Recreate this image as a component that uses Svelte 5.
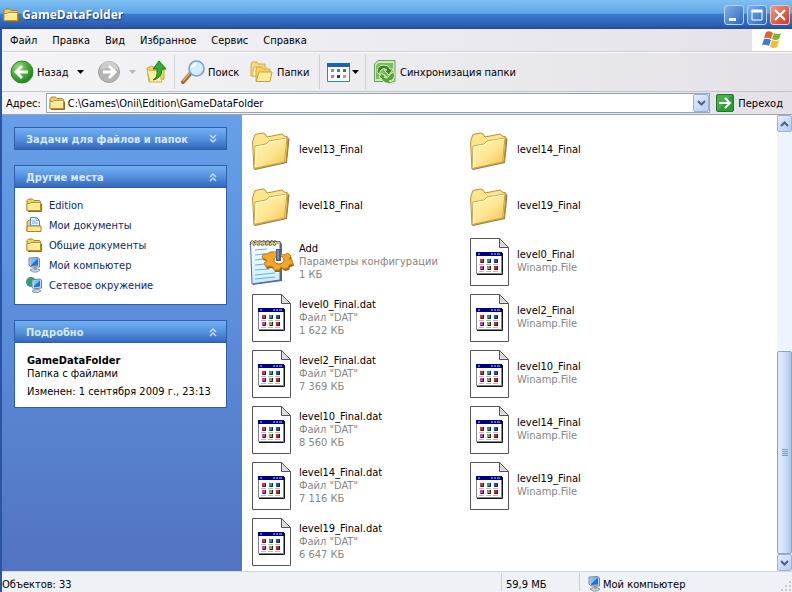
<script>
	const menus = ["Файл", "Правка", "Вид", "Избранное", "Сервис", "Справка"];

	const places = [
		{ name: "Edition", icon: "folder" },
		{ name: "Мои документы", icon: "docs" },
		{ name: "Общие документы", icon: "folder" },
		{ name: "Мой компьютер", icon: "computer" },
		{ name: "Сетевое окружение", icon: "network" },
	];

	const items = [
		{ name: "level13_Final", icon: "folder" },
		{ name: "level14_Final", icon: "folder" },
		{ name: "level18_Final", icon: "folder" },
		{ name: "level19_Final", icon: "folder" },
		{ name: "Add", icon: "config", type: "Параметры конфигурации", size: "1 КБ" },
		{ name: "level0_Final", icon: "file", type: "Winamp.File" },
		{ name: "level0_Final.dat", icon: "file", type: 'Файл "DAT"', size: "1 622 КБ" },
		{ name: "level2_Final", icon: "file", type: "Winamp.File" },
		{ name: "level2_Final.dat", icon: "file", type: 'Файл "DAT"', size: "7 369 КБ" },
		{ name: "level10_Final", icon: "file", type: "Winamp.File" },
		{ name: "level10_Final.dat", icon: "file", type: 'Файл "DAT"', size: "8 560 КБ" },
		{ name: "level14_Final", icon: "file", type: "Winamp.File" },
		{ name: "level14_Final.dat", icon: "file", type: 'Файл "DAT"', size: "7 116 КБ" },
		{ name: "level19_Final", icon: "file", type: "Winamp.File" },
		{ name: "level19_Final.dat", icon: "file", type: 'Файл "DAT"', size: "6 647 КБ" },
	];

	let path = $state("C:\\Games\\Onii\\Edition\\GameDataFolder");
	let tasksOpen = $state(false);
	let placesOpen = $state(true);
	let detailsOpen = $state(true);
</script>

{#snippet smallFolder()}
	<svg class="icon16" viewBox="0 0 16 16">
		<path d="M1 13.5v-10L2.500 2h4L8 3.500h5.500l1 1v9z" fill="#f3cf5b" stroke="#a8842a" />
		<path d="M1 13.500V6.500h3l1-1h9.500v8z" fill="#fdea93" stroke="#b8912e" />
		<path d="M2 14.500h13.500v-8" fill="none" stroke="#8a6d24" />
		<path d="M5 6.500h9" stroke="#fffbe0" />
	</svg>
{/snippet}

{#snippet docs()}
	<svg class="icon16" viewBox="0 0 16 16">
		<path d="M1 14V5l2-2h2v11z" fill="#f3cf5b" stroke="#a8842a" />
		<path d="M4.500 11V.5h6l3 3V11z" fill="#e6f4ff" stroke="#5f86b8" />
		<path d="M10 .5v3h3M6 4h3M6 6h6" fill="none" stroke="#78a6dc" />
		<path d="M1 14.500V9h14v5.500z" fill="#fce88e" stroke="#a8842a" />
		<path d="M4 8.500h9" stroke="#6ea2d8" />
	</svg>
{/snippet}

{#snippet computer()}
	<svg class="icon16" viewBox="0 0 16 16">
		<path d="M4 13l5-2 5 2-3 2H7z" fill="#d0d4dc" stroke="#8e96a6" />
		<path d="M8 9h3v4H8z" fill="#98a2b4" />
		<path d="M3 1l9-.5 1.500 1.500v8L5 10 3 8z" fill="#bccbe0" stroke="#7187ac" />
		<path d="M5 2l7-.5v7L5 9z" fill="#1c72d2" />
		<path d="M5 2l7-.5L5 8z" fill="#6ec4f6" />
	</svg>
{/snippet}

{#snippet network()}
	<svg class="icon16" viewBox="0 0 16 16">
		<circle cx="5" cy="5" r="5" fill="#2d8bd0" />
		<path d="M1 3l3-3 4 1-1 3-3 1 1 4-4-2z" fill="#38a446" />
		<path d="M6 14l6-2 3 2-3 1.500H8z" fill="#d0d4dc" stroke="#8e96a6" />
		<path d="M6 3l8-1 1.500 1v8l-8 1L6 10z" fill="#c7d7ea" stroke="#6681aa" />
		<path d="M8 4l6-.5v6l-6 1z" fill="#1c72d2" />
		<path d="M8 4l6-.5L8 9z" fill="#6ec4f6" />
	</svg>
{/snippet}

{#snippet bigFolder()}
	<svg class="icon48" viewBox="0 0 48 48">
		<defs>
			<linearGradient id="folderFront" x1="0" y1="0" x2="1" y2="1">
				<stop offset="0" stop-color="#fff5b0" />
				<stop offset=".5" stop-color="#fde795" />
				<stop offset="1" stop-color="#f4c14a" />
			</linearGradient>
		</defs>
		<path d="M8 44l32-7 2.500-24-2-1L38 36 7 43z" fill="#6b5a30" opacity=".8" />
		<path d="M5.500 16l1-3 1-4L10 8l6-1 2 1 2 3 15-3 2 2 4 1-2 25L7 43z" fill="#fbe58c" stroke="#b59335" />
		<path d="M7 42.500L8 20l11-2 3-3 18-3-2.500 24z" fill="url(#folderFront)" stroke="#c9a544" />
		<path d="M8.500 41L9 21l11-2 3-3 16-3" fill="none" stroke="#fffbe0" />
	</svg>
{/snippet}

{#snippet configFile()}
	<svg class="icon48" viewBox="0 0 48 48">
		<defs>
			<linearGradient id="notePaper" x1="0" y1="0" x2="0" y2="1">
				<stop offset="0" stop-color="#fff" />
				<stop offset="1" stop-color="#c7effc" />
			</linearGradient>
		</defs>
		<path d="M6 5l28-1 1 3v36L6 47z" fill="#526090" />
		<path d="M3.500 4.500L33 3.500V42L5 46z" fill="url(#notePaper)" stroke="#5a5ecb" />
		<path d="M8 12l12-1M8 17l12-1M8 22l10-1M8 27l10-1M8 32l14-1M8 37l20-2M8 41l20-2" stroke="#70abe5" />
		<path d="M3 7q1-7 4-3t-1 3q1-7 5-3t-1 3q1-7 5-3t-1 3q1-7 5-3t-1 3q1-7 5-3t-1 3q1-7 5-3t-1 3q1-7 4-3" fill="none" stroke="#55563e" />
		<path d="M4 5h29" stroke="#e0c22e" stroke-width="2" stroke-dasharray="3 2" />
		<g transform="translate(32 22)">
			<path id="cog" d="M-4-8l4-1 2 3 3 1 4-2 3 3-2 3 3 1 1 4-4 1-1 3-4 1-3-2-2 3h-5l-1-3-3-1-4 1-2-4 3-2-2-2-3-1 1-4 4 0 3-2z" transform="translate(1 2)" fill="#94631b" />
			<path d="M-4-8l4-1 2 3 3 1 4-2 3 3-2 3 3 1 1 4-4 1-1 3-4 1-3-2-2 3h-5l-1-3-3-1-4 1-2-4 3-2-2-2-3-1 1-4 4 0 3-2z" fill="#efa62b" stroke="#c27e18" />
			<ellipse cx="0" cy="0" rx="5" ry="4" fill="#fff5cf" stroke="#a96c14" />
			<path d="M-3-11h5V1h-5z" fill="#4d5f7c" />
			<path d="M-1-10v9" stroke="#a8bfdd" />
		</g>
	</svg>
{/snippet}

{#snippet datFile()}
	<svg class="icon48" viewBox="0 0 48 48">
		<path d="M5.500.5h29l9 9v38h-38z" fill="#fff" stroke="#555" />
		<path d="M34.500.5v9h9z" fill="#ddd" stroke="#555" />
		<path d="M12 36.500h25.500V15" fill="none" stroke="#111" />
		<path d="M11.500 14.500h25v21h-25z" fill="#fff" stroke="#888" />
		<path d="M11 14h26v4H11z" fill="#000080" />
		<path d="M13 16h2M26 16h2M29 16h2M32 16h3" stroke="#c8d0f0" />
		<path d="M15 21h4v4h-4z" fill="#c13c3c" />
		<path d="M22 21h4v4h-4z" fill="#1a9bc0" />
		<path d="M29 21h4v4h-4z" fill="#1f4fc0" />
		<path d="M15 28h4v4h-4z" fill="#cf40af" />
		<path d="M22 28h4v4h-4z" fill="#9ba030" />
		<path d="M29 28h4v4h-4z" fill="#b12d2d" />
		<path d="M18.500 21v3.500H16M25.500 21v3.500H23M32.500 21v3.500H30M18.500 28v3.500H16M25.500 28v3.500H23M32.500 28v3.500H30" fill="none" stroke="#222" />
		<path d="M14 26.500h5M21 26.500h5M28 26.500h5M14 33.500h5M21 33.500h5M28 33.500h5" stroke="#bbb" />
	</svg>
{/snippet}

{#snippet chevron(open)}
	<svg class="chevron" class:open viewBox="0 0 16 16">
		<path d="M5 4l3 3 3-3M5 8l3 3 3-3" fill="none" stroke="#c4dafa" stroke-width="1.500" />
	</svg>
{/snippet}

{#snippet arrow(color)}
	<svg class="arrow" viewBox="0 0 7 4"><path d="M0 0h7L3.500 4z" fill={color} /></svg>
{/snippet}

<div class="window">
	<header class="titlebar">
		{@render smallFolder()}
		<h1>GameDataFolder</h1>
		<button class="win-btn" aria-label="Свернуть">
			<svg viewBox="0 0 18 18"><path d="M4 12h7v3H4z" fill="#fff" /></svg>
		</button>
		<button class="win-btn" aria-label="Развернуть">
			<svg viewBox="0 0 18 18"><path d="M4 5h10v9H4z" fill="none" stroke="#fff" /><path d="M3.500 5h11" stroke="#fff" stroke-width="3" /></svg>
		</button>
		<button class="win-btn close" aria-label="Закрыть">
			<svg viewBox="0 0 18 18"><path d="M4 4l10 10M14 4L4 14" stroke="#fff" stroke-width="2.200" /></svg>
		</button>
	</header>

	<nav class="menubar">
		{#each menus as menu}
			<button>{menu}</button>
		{/each}
		<div class="flag">
			<svg viewBox="0 0 22 20">
				<path d="M5 2q4-2 7 1l-2 6q-3-2-7-1z" fill="#e8602c" />
				<path d="M13 3q4 2 7 0l-2 6q-3 2-7 0z" fill="#7cb82f" />
				<path d="M3 9q4-1 7 1l-2 6q-3-2-7-1z" fill="#4279d0" />
				<path d="M11 10q4 2 7 0l-2 7q-4 2-7 0z" fill="#f5bc2c" />
			</svg>
		</div>
	</nav>

	<div class="toolbar">
		<button class="tool back">
			<svg class="icon24" viewBox="0 0 24 24">
				<defs>
					<radialGradient id="backBall" cx=".35" cy=".3" r=".8">
						<stop offset="0" stop-color="#a5dd87" />
						<stop offset=".5" stop-color="#47ab35" />
						<stop offset="1" stop-color="#177a14" />
					</radialGradient>
				</defs>
				<circle cx="12" cy="12" r="11" fill="url(#backBall)" stroke="#2f8a2a" />
				<path d="M18 12H7M12 6l-6 6 6 6" fill="none" stroke="#fff" stroke-width="2.800" />
			</svg>
			<span>Назад</span>
			{@render arrow("#000")}
		</button>
		<button class="tool forward" aria-label="Вперед" disabled>
			<svg class="icon24" viewBox="0 0 24 24">
				<circle cx="12" cy="12" r="10.500" fill="#b4b4b4" stroke="#9c9c9c" />
				<path d="M3 10a9 9 0 0 1 18 0q-9-4-18 0z" fill="#cdcdcd" />
				<path d="M6 12h11M12 6l6 6-6 6" fill="none" stroke="#fff" stroke-width="2.800" />
			</svg>
			{@render arrow("#b8b8b8")}
		</button>
		<button class="tool up" aria-label="Вверх">
			<svg class="icon24" viewBox="0 0 24 24">
				<path d="M2 8l5-2 3 2 9-2v13L4 22z" fill="#f4d160" stroke="#c9a544" />
				<path d="M2 10l12 1 3 11H5z" fill="#fdf0a6" stroke="#d3b24c" />
				<path d="M8 20q5-2 4-11H8l6-8 7 8h-4q0 9-9 11z" fill="#2faf31" stroke="#187c1d" />
			</svg>
		</button>
		<div class="sep"></div>
		<button class="tool search">
			<svg class="icon24" viewBox="0 0 24 24">
				<path d="M2 22l7-8" stroke="#a3632b" stroke-width="4" stroke-linecap="round" />
				<path d="M2 21l7-8" stroke="#e7b171" stroke-width="1.500" />
				<circle cx="15.500" cy="8.500" r="7.500" fill="#d2edfc" stroke="#739fd4" stroke-width="1.600" />
				<path d="M10 8q1-5 6-5-1 3-6 5z" fill="#fff" />
			</svg>
			<span>Поиск</span>
		</button>
		<button class="tool folders">
			<svg class="icon24" viewBox="0 0 24 24">
				<path d="M1 16V4l1-2h5l1 2h7v12z" fill="#f7d977" stroke="#cfac4c" />
				<path d="M2 16L4 7h12v9z" fill="#fdf0aa" stroke="#d9b960" />
				<path d="M6 21V9l1-2h4l2 2h7v12z" fill="#f4d160" stroke="#cfac4c" />
				<path d="M6 21.500L9 12h13l-2 9.500z" fill="#fdeb9c" stroke="#c6a140" />
			</svg>
			<span>Папки</span>
		</button>
		<div class="sep"></div>
		<button class="tool views" aria-label="Вид">
			<svg class="icon24" viewBox="0 0 24 24">
				<path d="M.5 3.500h22v18H.5z" fill="#f8fcff" stroke="#3484c4" />
				<path d="M0 3h23v4H0z" fill="#1a62b2" />
				<path d="M4 9h3v3H4z" fill="#8b94a4" />
				<path d="M10 9h3v3h-3z" fill="#5473b8" />
				<path d="M16 9h3v3h-3z" fill="#37843e" />
				<path d="M4 15h3v3H4z" fill="#d56ba4" />
				<path d="M10 15h3v3h-3z" fill="#173f91" />
				<path d="M16 15h3v3h-3z" fill="#e39346" />
			</svg>
			{@render arrow("#000")}
		</button>
		<div class="sep"></div>
		<button class="tool sync">
			<svg class="icon24" viewBox="0 0 24 24">
				<path d="M5 .5h17v21H1.500V4z" fill="#cfe8bc" stroke="#68a258" />
				<path d="M5 3h15v16H3V6z" fill="#7db862" />
				<path d="M4 12q0-7 7-7 5 0 6 4h3l-4 6-5-5h3q-3-3-6 0-2 2-1 5z" fill="#3b8627" stroke="#d4efbc" />
				<path d="M21 12q2 8-5 9l6 2q-12 2-14-5H6l2-5 6 4h-3q4 3 6-3z" fill="#54a236" stroke="#d4efbc" />
			</svg>
			<span>Синхронизация папки</span>
		</button>
	</div>

	<div class="addressbar">
		<label for="address">Адрес:</label>
		<div class="address-box">
			{@render smallFolder()}
			<input id="address" type="text" bind:value={path} />
			<button class="drop" aria-label="Показать список">
				<svg viewBox="0 0 9 6"><path d="M1 1l3.500 3.500L8 1" fill="none" stroke="#4d6185" stroke-width="2" /></svg>
			</button>
		</div>
		<button class="go">
			<svg viewBox="0 0 18 18">
				<rect x=".5" y=".5" width="17" height="17" rx="1.500" fill="#2f9a3a" stroke="#1d7a2a" />
				<path d="M1 17V2l1-1h14z" fill="#5fbb5c" opacity=".6" />
				<path d="M3 9h10M9 4l5 5-5 5" fill="none" stroke="#fff" stroke-width="2" />
			</svg>
			<span>Переход</span>
		</button>
	</div>

	<div class="body">
		<aside>
			<section>
				<button class="panel-head" onclick={() => (tasksOpen = !tasksOpen)}>
					<span>Задачи для файлов и папок</span>
					{@render chevron(tasksOpen)}
				</button>
			</section>

			<section>
				<button class="panel-head" onclick={() => (placesOpen = !placesOpen)}>
					<span>Другие места</span>
					{@render chevron(placesOpen)}
				</button>
				{#if placesOpen}
					<ul class="places">
						{#each places as place}
							<li>
								<a href="#{place.name}">
									{#if place.icon === "folder"}
										{@render smallFolder()}
									{:else if place.icon === "docs"}
										{@render docs()}
									{:else if place.icon === "computer"}
										{@render computer()}
									{:else}
										{@render network()}
									{/if}
									{place.name}
								</a>
							</li>
						{/each}
					</ul>
				{/if}
			</section>

			<section>
				<button class="panel-head" onclick={() => (detailsOpen = !detailsOpen)}>
					<span>Подробно</span>
					{@render chevron(detailsOpen)}
				</button>
				{#if detailsOpen}
					<div class="details">
						<b>GameDataFolder</b>
						<p>Папка с файлами</p>
						<p class="changed">Изменен: 1 сентября 2009 г., 23:13</p>
					</div>
				{/if}
			</section>
		</aside>

		<main>
			{#each items as item}
				<div class="item">
					{#if item.icon === "folder"}
						{@render bigFolder()}
					{:else if item.icon === "config"}
						{@render configFile()}
					{:else}
						{@render datFile()}
					{/if}
					<div class="label">
						<div>{item.name}</div>
						{#if item.type}<div class="sub">{item.type}</div>{/if}
						{#if item.size}<div class="sub">{item.size}</div>{/if}
					</div>
				</div>
			{/each}
		</main>

		<div class="scrollbar">
			<button aria-label="Прокрутить вверх">
				<svg viewBox="0 0 9 6"><path d="M1 5l3.500-3.500L8 5" fill="none" stroke="#4d6185" stroke-width="2" /></svg>
			</button>
			<div class="track">
				<div class="thumb"><i></i><i></i><i></i><i></i></div>
			</div>
			<button aria-label="Прокрутить вниз">
				<svg viewBox="0 0 9 6"><path d="M1 1l3.500 3.500L8 1" fill="none" stroke="#4d6185" stroke-width="2" /></svg>
			</button>
		</div>
	</div>

	<footer>
		<span class="count">Объектов: 33</span>
		<span class="total">59,9 МБ</span>
		<span class="zone">{@render computer()}Мой компьютер</span>
		<svg class="grip" viewBox="0 0 12 12">
			<path d="M9 1h2v2H9zM9 5h2v2H9zM9 9h2v2H9zM5 5h2v2H5zM5 9h2v2H5zM1 9h2v2H1z" fill="#c4c8d0" />
		</svg>
	</footer>
</div>

<style>
	:global(body) {
		margin: 0;
	}

	.window {
		display: flex;
		flex-direction: column;
		min-height: 100vh;
		box-sizing: border-box;
		border-left: 2px solid #2a55a5;
		background: linear-gradient(to right, #f4f4f7, #e4e2e8);
		font-family: "DejaVu Sans Condensed", Tahoma, sans-serif;
		font-size: 11px;
		line-height: 13px;
		color: #000;
		white-space: nowrap;
	}

	svg {
		display: block;
		flex: none;
	}
	.icon16 {
		width: 16px;
		height: 16px;
	}
	.icon24 {
		width: 24px;
		height: 24px;
	}
	.icon48 {
		width: 48px;
		height: 48px;
	}
	.arrow {
		width: 7px;
		height: 4px;
	}

	button {
		font: inherit;
		color: inherit;
		background: none;
		border: 0;
		padding: 0;
	}

	/* title */
	.titlebar {
		display: flex;
		align-items: center;
		height: 29px;
		margin-left: -2px;
		padding: 0 2px 0 3px;
		gap: 3px;
		background: linear-gradient(#7fc0f2, #5fa5ea 45%, #3a7bd0 50%, #2c5bb0 90%, #24479a);
	}
	h1 {
		flex: 1;
		margin: 0;
		font-family: "Open Sans", "Trebuchet MS", sans-serif;
		font-size: 12px;
		line-height: 16px;
		color: #fff;
		text-shadow: 1px 1px 1px #1d3f80;
	}
	.win-btn {
		width: 20px;
		height: 20px;
		border: 1px solid #b9d3f3;
		border-radius: 3px;
		background: linear-gradient(135deg, #7fb2ea, #2b66bd);
	}
	.win-btn svg {
		width: 18px;
		height: 18px;
	}
	.win-btn.close {
		background: linear-gradient(135deg, #ee9a85, #cb3a1e);
		border-color: #f0c4ba;
	}

	/* menu */
	.menubar {
		display: flex;
		align-items: center;
		gap: 15px;
		height: 22px;
		padding-left: 8px;
		border-bottom: 1px solid #cfcfd4;
	}
	.flag {
		display: flex;
		align-items: center;
		justify-content: center;
		align-self: stretch;
		width: 40px;
		margin-left: auto;
		background: #fff;
	}
	.flag svg {
		width: 22px;
		height: 20px;
	}

	/* toolbar */
	.toolbar {
		display: flex;
		align-items: center;
		height: 38px;
		padding-left: 8px;
		border-top: 1px solid #fafafc;
		border-bottom: 1px solid #c4c3c8;
	}
	.tool {
		display: flex;
		align-items: center;
		gap: 3px;
	}
	.back {
		width: 87px;
	}
	.back .arrow {
		margin-left: 5px;
	}
	.forward {
		width: 48px;
		gap: 8px;
	}
	.sep {
		width: 1px;
		height: 34px;
		background: #cfcfd4;
	}
	.up {
		width: 29px;
	}
	.search {
		width: 75px;
		box-sizing: border-box;
		padding-left: 6px;
	}
	.folders {
		width: 69px;
	}
	.views {
		width: 45px;
		gap: 1px;
		padding-left: 7px;
		box-sizing: border-box;
	}
	.sync {
		padding-left: 7px;
	}

	/* address */
	.addressbar {
		display: flex;
		align-items: center;
		height: 22px;
		padding-left: 4px;
		border-bottom: 1px solid #a3a2a6;
	}
	.address-box {
		display: flex;
		align-items: center;
		flex: 1;
		height: 20px;
		margin-left: 5px;
		padding-left: 2px;
		border: 1px solid #8fa4bd;
		box-sizing: border-box;
		background: #fff;
	}
	input {
		flex: 1;
		min-width: 0;
		margin-left: 3px;
		padding: 0;
		border: 0;
		outline: 0;
		background: none;
		font: inherit;
	}
	.drop,
	.scrollbar button {
		display: flex;
		align-items: center;
		justify-content: center;
		width: 16px;
		height: 18px;
		box-sizing: border-box;
		border: 1px solid #9cb2d4;
		border-radius: 2px;
		background: linear-gradient(135deg, #e2edfc, #b4ccee);
	}
	.drop svg,
	.scrollbar button svg {
		width: 9px;
		height: 6px;
	}
	.go {
		display: flex;
		align-items: center;
		gap: 4px;
		padding: 0 9px 0 6px;
	}
	.go svg {
		width: 18px;
		height: 18px;
	}

	/* body */
	.body {
		display: flex;
		flex: 1;
		background: #fff;
	}
	aside {
		display: flex;
		flex-direction: column;
		gap: 15px;
		width: 240px;
		box-sizing: border-box;
		padding: 12px 15px 12px 12px;
		background: linear-gradient(#669fe8, #5a8bd8 50%, #5273c1);
	}
	.panel-head {
		display: flex;
		align-items: center;
		justify-content: space-between;
		width: 100%;
		height: 23px;
		padding: 1px 5px 0 11px;
		border: 1px solid #2d5fae;
		background: linear-gradient(#74b0ef, #5592df 50%, #3567bd);
		color: #d8e8fc;
		font-weight: bold;
	}
	.chevron {
		width: 16px;
		height: 16px;
	}
	.chevron.open {
		transform: rotate(180deg);
	}
	.places,
	.details {
		margin: 0;
		border: 1px solid #2d5fae;
		border-top: 0;
		background: #fff;
	}
	.places {
		padding: 7px 11px 9px;
		list-style: none;
	}
	.places a {
		display: flex;
		align-items: center;
		gap: 7px;
		height: 20px;
		color: #0b2a66;
		text-decoration: none;
	}
	.details {
		padding: 11px 12px 9px;
	}
	.details p {
		margin: 0;
	}
	.details .changed {
		margin-top: 5px;
	}

	main {
		display: grid;
		flex: 1;
		grid-template-columns: repeat(auto-fill, 218px);
		grid-auto-rows: 56px;
		align-content: start;
		padding: 7px 0 0 5px;
	}
	.item {
		display: flex;
		align-items: center;
		gap: 4px;
	}
	.label {
		padding-bottom: 2px;
	}
	.sub {
		color: #858585;
	}

	.scrollbar {
		display: flex;
		flex-direction: column;
		width: 15px;
		background: #edf4fd;
	}
	.scrollbar button {
		width: 15px;
		height: 17px;
	}
	.track {
		display: flex;
		flex: 1;
		flex-direction: column;
		justify-content: flex-end;
	}
	.thumb {
		display: flex;
		flex-direction: column;
		align-items: center;
		justify-content: center;
		gap: 1px;
		height: 48%;
		box-sizing: border-box;
		border: 1px solid #8ba5c9;
		border-radius: 2px;
		background: linear-gradient(to right, #dfebfb, #cfe1f8 50%, #abc6ea);
	}
	.thumb i {
		width: 6px;
		height: 1px;
		background: #7f97b8;
	}

	/* status */
	footer {
		display: flex;
		align-items: center;
		height: 21px;
		box-sizing: border-box;
		border-top: 1px solid #d3d7dd;
		background: #eef1f5;
	}
	.count,
	.total,
	.zone {
		display: flex;
		align-items: center;
		height: 18px;
		padding-top: 4px;
		box-sizing: border-box;
	}
	.count {
		flex: 1;
	}
	.total,
	.zone {
		border-left: 1px solid #c9cdd4;
	}
	.total {
		width: 78px;
		padding-left: 4px;
	}
	.zone {
		width: 201px;
		gap: 1px;
		padding-left: 6px;
	}
	.grip {
		width: 12px;
		height: 12px;
		align-self: flex-end;
	}
</style>
